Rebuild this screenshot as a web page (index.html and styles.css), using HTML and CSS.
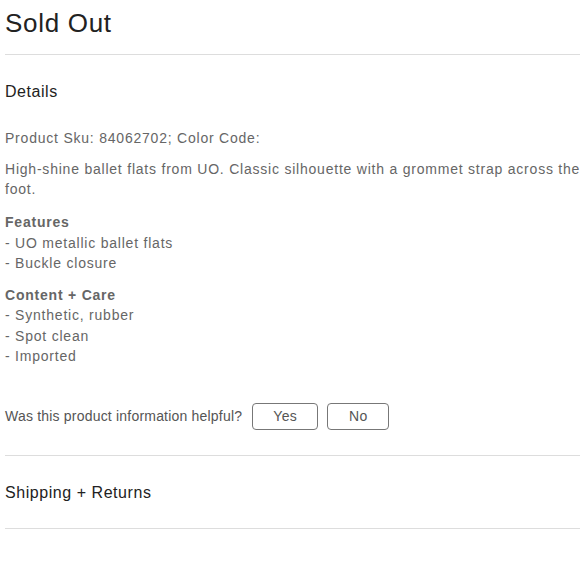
FILE: index.html
```html
<!DOCTYPE html>
<html>
<head>
<meta charset="utf-8">
<link rel="stylesheet" href="styles.css">
</head>
<body>
<div class="page">
  <h1 class="title">Sold Out</h1>
  <hr class="rule">
  <section class="details">
    <h2 class="section-head">Details</h2>
    <p class="sku">Product Sku: 84062702; Color Code:</p>
    <p class="desc">High-shine ballet flats from UO. Classic silhouette with a grommet strap across the foot.</p>
    <div class="group">
      <div class="group-title">Features</div>
      <div class="item">- UO metallic ballet flats</div>
      <div class="item">- Buckle closure</div>
    </div>
    <div class="group">
      <div class="group-title">Content + Care</div>
      <div class="item">- Synthetic, rubber</div>
      <div class="item">- Spot clean</div>
      <div class="item">- Imported</div>
    </div>
    <div class="helpful">
      <span class="question">Was this product information helpful?</span>
      <button class="btn">Yes</button>
      <button class="btn">No</button>
    </div>
  </section>
  <hr class="rule">
  <h2 class="section-head ship">Shipping + Returns</h2>
  <hr class="rule">
</div>
</body>
</html>
```
FILE: styles.css
```css
html, body {
  margin: 0;
  padding: 0;
  background: #fff;
  overflow: hidden;
}
body {
  font-family: "Liberation Sans", Arial, Helvetica, sans-serif;
  color: #222;
}
.page {
  width: 592px;
  padding-left: 5px;
}
.title {
  margin: 0;
  padding-top: 6px;
  font-size: 26px;
  font-weight: 400;
  letter-spacing: 0.7px;
  line-height: 34px;
  color: #222;
}
.rule {
  border: 0;
  border-top: 1px solid #ddd;
  margin: 0;
}
.page > .rule:first-of-type {
  margin-top: 14px;
}
.section-head {
  margin: 0;
  font-size: 16px;
  font-weight: 400;
  letter-spacing: 0.55px;
  line-height: 20px;
  color: #222;
}
.details {
  padding-top: 27px;
  padding-bottom: 25px;
}
.sku, .desc, .item, .group-title, .question {
  font-size: 14px;
  color: #666;
  letter-spacing: 0.78px;
}
.sku {
  margin: 26px 0 0;
  line-height: 20px;
}
.desc {
  margin: 12px 0 0;
  line-height: 19.5px;
}
.group {
  margin-top: 13px;
  line-height: 20.5px;
}
.group + .group {
  margin-top: 11px;
}
.group-title {
  font-weight: 700;
}
.helpful {
  display: flex;
  align-items: center;
  gap: 9px;
  margin-top: 36px;
}
.question {
  margin-right: 1px;
  letter-spacing: 0.2px;
  color: #555;
}
.btn {
  width: 66px;
  height: 27px;
  border: 1px solid #777;
  border-radius: 4px;
  background: #fff;
  font-family: inherit;
  font-size: 14px;
  letter-spacing: 0.3px;
  color: #555;
  padding: 0;
}
.btn + .btn { width: 62px; }
.ship {
  padding: 27px 0 25px;
}
```
